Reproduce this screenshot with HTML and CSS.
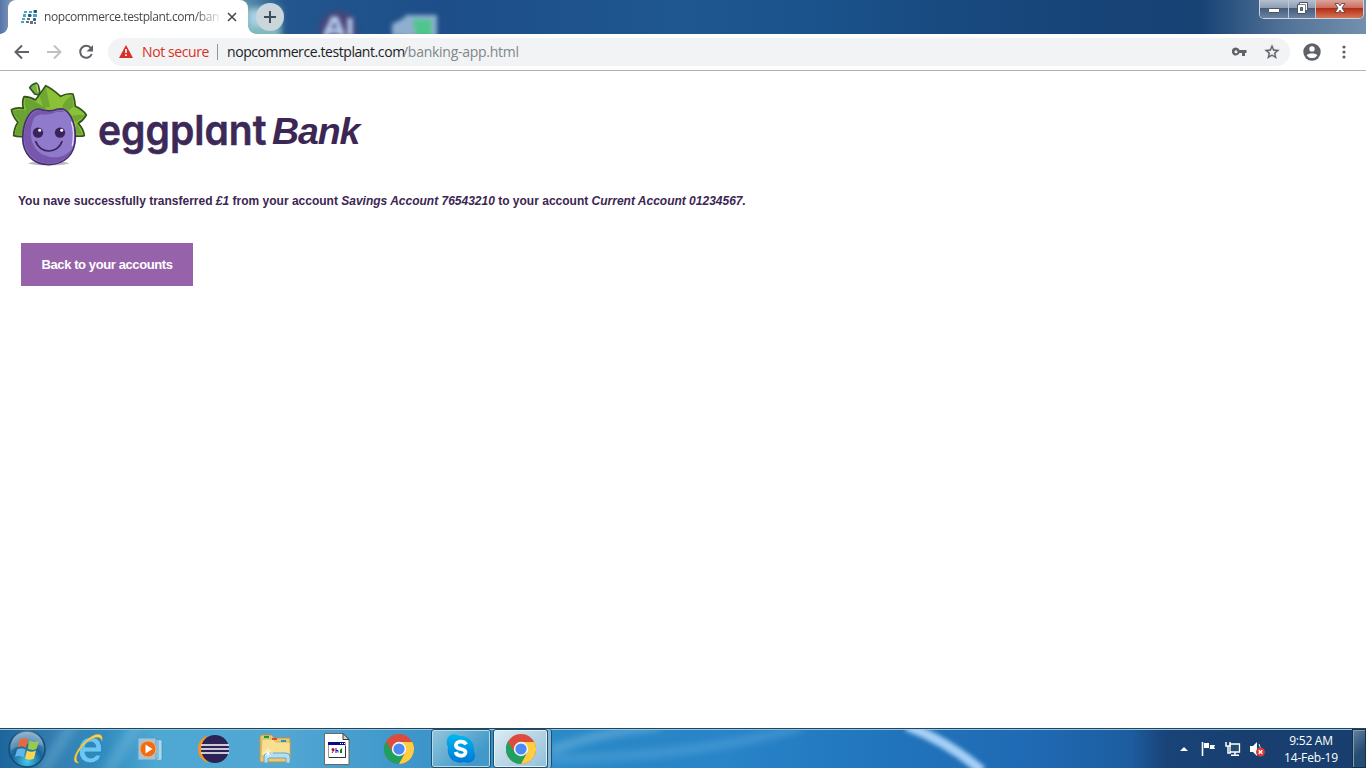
FILE: index.html
```
<!DOCTYPE html>
<html lang="en">
<head>
<meta charset="utf-8">
<title>eggplant Bank</title>
<link rel="stylesheet" href="styles.css">
</head>
<body>
<svg class="defs" width="0" height="0" aria-hidden="true">
  <defs>
    <symbol id="chrome" viewBox="0 0 30 30">
      <circle cx="15" cy="15" r="15" fill="#db4c3f"/>
      <path d="M15 15 8.800 18.600 2 7.500A15 15 0 0 0 15 30L21.200 18.600Z" fill="#1fa05e"/>
      <path d="M15 8H28.300A15 15 0 0 1 15 30L21.200 18.600Z" fill="#ffcd40"/>
      <circle cx="15" cy="15" r="7.200" fill="#f4f4f4"/>
      <circle cx="15" cy="15" r="5.600" fill="#4a8af4"/>
    </symbol>
    <filter id="soft" x="-30%" y="-30%" width="160%" height="160%"><feGaussianBlur stdDeviation="3"/></filter>
    <filter id="wide" x="-30%" y="-60%" width="160%" height="220%"><feGaussianBlur stdDeviation="2"/></filter>
    <filter id="haze" x="-30%" y="-60%" width="160%" height="220%"><feGaussianBlur stdDeviation="4"/></filter>
  </defs>
</svg>
<div class="screen">
  <header class="titlebar">
    <svg class="wallpaper" viewBox="0 0 1366 34" preserveAspectRatio="none" aria-hidden="true">
      <g filter="url(#soft)">
        <rect x="240" y="8" width="41" height="34" fill="#7fb9bd"/><rect x="250" y="9" width="16" height="17" fill="#abd1e5"/>
        <circle cx="338" cy="29" r="18" fill="#494477"/>
      </g>
      <g filter="url(#wide)">
        <path d="M325 36 333 19h3l7 17M328 31h12M350 18v18" fill="none" stroke="#b5caec" stroke-width="5"/>
        <path d="M392 24l14-7v19h-14zM405 15h32v22h-32z" fill="#8eafd0"/><path d="M412 19h20v18h-16z" fill="#50c58d"/>
      </g>
    </svg>
    <div class="tab">
      <svg width="18" height="14" viewBox="0 0 18 14"><g fill="#4ba3cc"><rect x="4" y="1" width="3" height="2"/><rect x="9" y="1" width="3" height="2"/><rect x="3" y="4" width="3" height="3"/><rect x="2" y="8" width="3" height="2"/><rect x="1" y="11" width="3" height="2"/><rect x="13" y="4" width="4" height="3"/></g><g fill="#24587a"><rect x="13.500" y="0" width="3.500" height="3" rx="1"/><rect x="8" y="4" width="3.500" height="3" rx="1"/><rect x="13" y="8" width="3" height="3" rx="1"/></g><g fill="#66717a"><rect x="7" y="8" width="3" height="2"/><rect x="6" y="11" width="3" height="2"/><rect x="10" y="11" width="3" height="3"/><rect x="14" y="12" width="2" height="2"/></g></svg>
      <span class="tab-title">nopcommerce.testplant.com/ban</span>
      <svg width="10" height="10" viewBox="0 0 10 10"><path d="M1 1l8 8M9 1 1 9" stroke="#45494d" stroke-width="1.600"/></svg>
    </div>
    <div class="new-tab"><svg width="14" height="14" viewBox="0 0 14 14"><path d="M7 1v12M1 7h12" stroke="#3d4d56" stroke-width="2"/></svg></div>
    <div class="window-buttons">
      <span class="wb wb-min"><svg width="14" height="18" viewBox="0 0 14 18"><rect x="1.500" y="8.500" width="11" height="4" rx=".5" fill="#fff" stroke="#4a5565"/></svg></span>
      <span class="wb wb-restore"><svg width="13" height="18" viewBox="0 0 13 18"><path d="M3.500 2.500h8v8h-2v3h-8v-9h2z" fill="#fff" stroke="#4a5565"/><path d="M4.500 7.500h2v3h-2z" fill="#72839a" stroke="#4a5565"/><path d="M4 4.500h5.500v6" fill="none" stroke="#4a5565" stroke-width=".7"/></svg></span>
      <span class="wb wb-close"><svg width="14" height="18" viewBox="0 0 14 18"><path d="M2 3.500h3.300L7 5.800l1.700-2.300H12L9 8l3 4.500H8.700L7 10.200l-1.700 2.300H2L5 8z" fill="#fff" stroke="#5a4350" stroke-width=".9"/></svg></span>
    </div>
  </header>
  <nav class="toolbar">
    <svg class="nav-icon" width="16" height="16" viewBox="0 0 16 16"><path d="M15 8H2M8 1.500 1.500 8 8 14.500" fill="none" stroke="#5f6368" stroke-width="2"/></svg>
    <svg class="nav-icon" width="16" height="16" viewBox="0 0 16 16"><path d="M1 8h13M8 1.500 14.500 8 8 14.500" fill="none" stroke="#bfc1c3" stroke-width="2"/></svg>
    <svg class="nav-icon" width="16" height="16" viewBox="0 0 16 16"><path d="M13 4.200A6 6 0 1 0 13.800 10" fill="none" stroke="#5f6368" stroke-width="2"/><path d="M15 1v6.500H8.500z" fill="#5f6368"/></svg>
    <div class="omnibox">
      <svg class="warning" width="14" height="13" viewBox="0 0 14 13"><path d="M7 0l7 13H0z" fill="#d93025"/><path d="M7 4v4M7 9.300v1.700" stroke="#fff" stroke-width="1.600"/></svg>
      <span class="not-secure">Not secure</span>
      <i class="divider"></i>
      <span class="host">nopcommerce.testplant.com</span><span class="path">/banking-app.html</span>
      <svg class="key" width="15" height="10" viewBox="0 0 15 10"><path fill-rule="evenodd" d="M7.500 3A4 4 0 1 0 7.500 6H10v3h3V6h1.500V3zM4 3.300a1.500 1.500 0 1 1 0 3 1.500 1.500 0 0 1 0-3z" fill="#5f6368"/></svg>
      <svg class="star" width="16" height="16" viewBox="1 1 22 22"><path fill="#5f6368" d="M22 9.240l-7.190-.62L12 2 9.190 8.630 2 9.240l5.460 4.730L5.820 21 12 17.270 18.180 21l-1.630-7.030L22 9.240zM12 15.400l-3.760 2.270 1-4.280-3.320-2.880 4.380-.38L12 6.100l1.710 4.040 4.380.38-3.320 2.880 1 4.280L12 15.400z" stroke="#5f6368" stroke-width=".5"/></svg>
    </div>
    <svg class="avatar" width="18" height="18" viewBox="0 0 18 18"><circle cx="9" cy="9" r="8.700" fill="#5f6368"/><circle cx="9" cy="5.900" r="2.700" fill="#fff"/><path d="M3.700 12.200C5 10 13 10 14.300 12.200 12 16 6 16 3.700 12.200z" fill="#fff"/></svg>
    <svg class="menu" width="4" height="14" viewBox="0 0 4 14"><g fill="#5f6368"><circle cx="2" cy="2" r="1.600"/><circle cx="2" cy="7" r="1.600"/><circle cx="2" cy="12" r="1.600"/></g></svg>
  </nav>
  <main class="page">
    <div class="brand">
      <svg width="90" height="94" viewBox="0 0 270 282" role="img" aria-label="Eggplant mascot">
        <ellipse cx="134" cy="262" rx="60" ry="6" fill="#bcb6ca"/>
        <path d="M60 62Q80 63 94 72L108 54 125 29Q145 38 170 61 188 51 207 54 213 73 214 91 237 101 247 117 237 134 223 142 240 161 241 179 228 183 207 178L65 180Q47 184 29 179 30 156 42 139 27 124 22 101 38 93 58 97 53 77 60 62z" fill="#8ac135" stroke="#32531f" stroke-width="5" stroke-linejoin="round"/>
        <path d="M64 66Q90 72 116 91L128 96 65 145 53 176H33Q35 158 47 136 31 120 26 105 48 99 67 103 59 82 64 66z" fill="#6aa333"/>
        <path d="M126 34 138 94H118L106 60zM205 58Q184 70 174 93L194 104 208 92zM241 117Q224 114 203 120L215 139 236 124zM218 142L211 174 236 176z" fill="#70a734"/>
        <path d="M92 54 77 35Q84 24 97 21L103 28 108 50 103 57z" fill="#79b13b" stroke="#2f5527" stroke-width="5" stroke-linejoin="round"/>
        <path d="M98 25 102 48" stroke="#b2db75" stroke-width="4"/>
        <path d="M106 99Q121 106 145 104 163 97 178 99C202 109 214 147 214 184 214 237 180 265 135 266 88 266 57 234 56 187 57 137 77 98 106 99z" fill="#8f7acb" stroke="#44306c" stroke-width="5"/>
        <path d="M107 102C79 105 61 140 60 184 60 233 94 262 135 262 172 262 200 240 207 215 185 244 153 251 120 237 76 218 72 163 92 123L110 115Q133 119 158 108L181 108 172 103Q151 108 138 109 119 108 107 102z" fill="#7757ac"/>
        <path d="M202 137Q213 165 205 210" fill="none" stroke="#e8ddff" stroke-width="4"/>
        <g fill="#3b2359"><circle cx="102" cy="170" r="15.500"/><circle cx="168" cy="170" r="15.500"/></g>
        <g fill="#fff"><circle cx="107" cy="163" r="4.500"/><circle cx="173" cy="163" r="4.500"/></g>
        <path d="M95 197Q107 225 135 225 163 224 174 197" fill="none" stroke="#3b2359" stroke-width="5" stroke-linecap="round"/>
      </svg>
      <svg class="wordmark" width="174" height="68" viewBox="94 96 174 68"><text class="wordmark-text" x="98" y="143.500" textLength="168.500" lengthAdjust="spacingAndGlyphs">eggplant</text></svg>
      <h1 class="bank">Bank</h1>
    </div>
    <p class="message">You nave successfully transferred <em>£1</em> from your account <em>Savings Account 76543210</em> to your account <em>Current Account 01234567.</em></p>
    <button class="back">Back to your accounts</button>
  </main>
  <footer class="taskbar">
    <svg class="wallpaper" viewBox="0 0 1366 40" preserveAspectRatio="none" aria-hidden="true">
      <g filter="url(#haze)" fill="none">
        <path d="M42 44 72-4M107 44 137-4" stroke="#90cbe6" stroke-opacity=".28" stroke-width="12"/>
        <path d="M550 31Q700 28 800-2" stroke="#60afe0" stroke-opacity=".38" stroke-width="10"/>
        <path d="M550 22Q600 3 660-3" stroke="#8bc7e9" stroke-opacity=".4" stroke-width="9"/>
      </g>
      <path d="M907-3Q948 13 982 43" fill="none" stroke="#a5cff6" stroke-width="10" filter="url(#wide)"/>
    </svg>
    <div class="start">
      <svg width="38" height="38" viewBox="0 0 38 38"><defs><radialGradient id="orb" cx=".5" cy=".85" r=".85"><stop stop-color="#43c9ed"/><stop offset=".5" stop-color="#17639a"/><stop offset="1" stop-color="#80a8c4"/></radialGradient></defs><circle cx="19" cy="19" r="18" fill="url(#orb)" stroke="#174b74" stroke-width="1.500"/><path d="M3 16A16 16 0 0 1 35 16Q20 10 3 20z" fill="#fff" opacity=".2"/><path d="M12 9.500Q16 7 20 9.500L18 18Q14 15.500 9.500 17.500z" fill="#eb683b"/><path d="M21.500 10.500Q26 13 31 11L28.500 19Q24 21 19.500 18.500z" fill="#9aca4b"/><path d="M9 19.500Q13.500 17 17.500 19.500L15.500 27.500Q11.500 25 7 27z" fill="#63b5e9"/><path d="M19 20.500Q23 23 28 20.500L26 28.500Q21 31 17 28.500z" fill="#ffd34b"/></svg>
    </div>
    <div class="slot"><svg width="32" height="32" viewBox="0 0 32 32"><path fill-rule="evenodd" d="M28.500 19H12Q12.500 25 18 25 21.500 25 23 22H28Q25 30 17 30 6 29 6 17 7 5 18 4 30 5 28.500 19zM12 14H23Q22 9 18 9 13 9 12 14z" fill="#6cc7f1" stroke="#2381bd" stroke-width=".8"/><path d="M6 30C-4 31 3 15 15 6 22 0 31-1 29 8 27 2 21 4 14 9 5 17 0 27 6 30z" fill="#ffd450" stroke="#c99b29" stroke-width=".5"/></svg></div>
    <div class="slot"><svg width="30" height="28" viewBox="0 0 30 28"><path d="M18 4l8 1v20l-8 1zM16 3l6 1v20l-6 1z" fill="#a7d9ef" stroke="#4d91b5" stroke-width=".7"/><rect x="2" y="3" width="18" height="22" fill="#9bc6e1" stroke="#5f9dc1"/><circle cx="12" cy="14" r="8" fill="#ef6b18" stroke="#ffad63"/><path d="M9.500 9.500v9l7-4.500z" fill="#fff"/></svg></div>
    <div class="slot slot-eclipse"><svg width="32" height="30" viewBox="0 0 32 30"><path d="M11 1Q0 4 0 15 0 26 11 29 5 24 4 15 4 6 11 1z" fill="#f7941e"/><circle cx="17" cy="15" r="14" fill="#2c2255"/><path d="M3 11h28M3 15h28M3 19h28" stroke="#fff" stroke-width="1.700"/></svg></div>
    <div class="slot"><svg width="32" height="30" viewBox="0 0 32 30"><path d="M1 28V3Q1 1 3 1h10l2 3h16v24z" fill="#eacb72" stroke="#b89344"/><path d="M3 5h11l3 3h14v17l-14-3H2z" fill="#f7e092" stroke="#c9a85c" stroke-width=".7"/><path d="M5 3h5" stroke="#169b42" stroke-width="2"/><path d="M13 5h5" stroke="#d44b37" stroke-width="2"/><path d="M22 7h5" stroke="#358ebd" stroke-width="2"/><path d="M5 29v-6q0-4 4-4h18q4 0 4 4v6h-4v-5H9v5z" fill="#b5def1" stroke="#67a6c8"/><path d="M9 14v10M4 19h10M6 16l6 6M12 16l-6 6" stroke="#fff" stroke-width=".8"/></svg></div>
    <div class="slot"><svg width="26" height="32" viewBox="0 0 26 32"><path d="M.5.500H19l6 6v25H.5z" fill="#fff" stroke="#6f6959"/><path d="M19 .5v6h6z" fill="#d6d6d6" stroke="#333"/><path d="M4.500 9.500h17v15h-17z" fill="#fff" stroke="#999"/><path d="M4 9h17v3H4z" fill="#08088a"/><path d="M16 10.500h1M18 10.500h1M20 10.500h1" stroke="#fff"/><circle cx="9" cy="16.500" r="1.500" fill="#b71322"/><path d="M10 17l-2 3" stroke="#b71322"/><path d="M12 15v5M12 17.500h2v2" fill="none" stroke="#1010b0"/><path d="M16 20v-3l2-2v5z" fill="#087b19"/><path d="M21.500 13v11.500H5" fill="none" stroke="#333"/></svg></div>
    <div class="slot"><svg class="chrome-icon"><use href="#chrome"/></svg></div>
    <div class="task task-skype"><svg width="30" height="30" viewBox="0 0 30 30"><defs><linearGradient id="sky" x2="0" y2="1"><stop stop-color="#00b8f0"/><stop offset="1" stop-color="#0078d4"/></linearGradient></defs><path d="M1 6C2 0 9-1 13 2 22 1 29 8 28 17 32 25 25 31 18 28 8 31 0 23 2 13Q0 10 1 6z" fill="url(#sky)"/><path d="M20 10.500C18 6 9 7 10 12 11 16 19 14 19.500 18 20 23 11 23 9.500 18" fill="none" stroke="#fff" stroke-width="3.800"/></svg></div>
    <div class="task task-chrome"><svg class="chrome-icon"><use href="#chrome"/></svg></div>
    <div class="task-stack"></div>
    <div class="tray">
      <svg width="8" height="4" viewBox="0 0 8 4"><path d="M0 4 4 0l4 4z" fill="#fff"/></svg>
      <svg class="flag" width="16" height="16" viewBox="0 0 16 16"><path d="M1.500 1v14" stroke="#fff" stroke-width="1.600"/><path d="M3 2h5l1 2h5l-1 2 1 2H9L8 7H3z" fill="#fff"/><path d="M8.500 2v5.500" stroke="#1b4572"/></svg>
      <svg class="network" width="16" height="16" viewBox="0 0 16 16"><path d="M5 3h9.500v8H5z" fill="#244d72" stroke="#fff" stroke-width="1.300"/><path d="M10 11v3M6 14.300h8M1 1v4h4V1M3 5v7h3" fill="none" stroke="#fff" stroke-width="1.500"/></svg>
      <svg class="volume" width="17" height="16" viewBox="0 0 17 16"><path d="M1 5h3l4-4v14l-4-4H1z" fill="#fff"/><path d="M10 3q3 4 0 9" fill="none" stroke="#d5e0e9"/><circle cx="11.500" cy="11" r="4.500" fill="#dd3833"/><path d="M9.700 9.200l3.600 3.600M13.300 9.200l-3.600 3.600" stroke="#fff" stroke-width="1.400"/></svg>
      <div class="clock"><span class="time">9:52 AM</span><span class="date">14-Feb-19</span></div>
      <div class="show-desktop"></div>
    </div>
  </footer>
</div>
</body>
</html>
```
FILE: styles.css
```
* { box-sizing: border-box; }
body { margin: 0; overflow: hidden; background: #fff; }
svg { display: block; flex: none; }
.defs { position: absolute; }
.screen { width: 1366px; height: 768px; display: flex; flex-direction: column; font-family: "Open Sans", "Noto Sans", sans-serif; }
.titlebar { position: relative; height: 34px; display: flex; align-items: flex-start; padding-left: 8px; background: linear-gradient(90deg, #5675aa 0, #738db5 8px, #5b8ea9 244px, #23568e 285px, #1d4e89 440px, #1f5791 680px, #1b548d 800px, #184a80 940px, #174377 1110px, #174274 1200px, #4f7096 1280px, #7390ad 1366px); }
.wallpaper { position: absolute; inset: 0; width: 100%; height: 100%; pointer-events: none; }
.tab { position: relative; width: 240px; height: 34px; display: flex; align-items: center; padding: 0 11px 0 12px; background: #fff; border-radius: 8px 8px 0 0; }
.tab::before, .tab::after { content: ""; position: absolute; bottom: 0; width: 8px; height: 8px; }
.tab::before { left: -8px; background: radial-gradient(circle at 0 0, transparent 7.5px, #fff 8px); }
.tab::after { right: -8px; background: radial-gradient(circle at 100% 0, transparent 7.5px, #fff 8px); }
.tab-title { width: 178px; margin: 0 5px 0 6px; overflow: hidden; font-size: 12px; line-height: 18px; letter-spacing: -.42px; white-space: nowrap; color: #45494d; mask-image: linear-gradient(90deg, #000 150px, transparent 179px); }
.new-tab { position: relative; width: 28px; height: 28px; display: grid; place-items: center; margin: 3px 0 0 8px; border-radius: 50%; background: #cad6dc; }
.window-buttons { position: relative; width: 105px; height: 19px; display: flex; margin: 0 2px 0 auto; border: 1px solid #cbd4df; border-top: 0; border-radius: 0 0 5px 5px; overflow: hidden; box-shadow: inset 0 0 0 1px #263448; }
.wb { height: 18px; display: grid; place-items: center; border-right: 1px solid #bdc8d5; background: linear-gradient(#b4bfce 0, #8d9cb2 44%, #455d7b 46%, #6b839f 100%); }
.wb-min { width: 29px; }
.wb-restore { width: 27px; }
.wb-close { flex: 1; border: 0; background: linear-gradient(#dca49a 0, #ca6d5d 44%, #b52b13 46%, #d57657 100%); }
.toolbar { height: 37px; display: flex; align-items: center; padding: 0 20px 0 14px; border-bottom: 1px solid #b1b2b4; background: #fff; }
.nav-icon { margin-right: 16px; }
.nav-icon + .nav-icon + .nav-icon { margin-right: 14px; }
.omnibox { width: 1182px; height: 28px; display: flex; align-items: center; padding: 0 10px 0 11px; border-radius: 14px; background: #f1f3f4; font-size: 14px; line-height: 20px; white-space: nowrap; }
.warning { margin-bottom: 1px; }
.not-secure { width: 67px; margin-left: 9px; color: #d93025; letter-spacing: -.4px; }
.divider { width: 1px; height: 16px; margin: 0 9px 0 8px; background: #919498; }
.host { width: 176px; color: #202124; letter-spacing: -.42px; }
.path { color: #80868b; letter-spacing: -.27px; }
.key { margin-left: auto; }
.star { margin-left: 17px; }
.avatar { margin-left: 13px; }
.menu { margin-left: auto; }
.page { flex: 1; display: flex; flex-direction: column; align-items: flex-start; padding: 5px 4px; color: #3c2653; font-family: "Liberation Sans", Arial, sans-serif; }
.brand { display: flex; height: 94px; }
.wordmark { margin-top: 21px; }
.wordmark-text { font-family: Inter, sans-serif; font-size: 41px; font-weight: 600; font-feature-settings: "cv11"; fill: #3c2958; stroke: #3c2958; stroke-width: .5px; }
.bank { margin: 34px 0 0 4px; font-size: 37.5px; line-height: 43px; font-style: italic; font-weight: bold; letter-spacing: -1.1px; }
.message { margin: 23px 0 0 14px; font-size: 12px; line-height: 16px; font-weight: bold; letter-spacing: 0; white-space: nowrap; }
.back { width: 172px; height: 43px; margin: 34px 0 0 17px; padding: 0; border: 0; background: #9662aa; color: #fff; font: bold 13px "Liberation Sans", Arial, sans-serif; letter-spacing: -.4px; white-space: nowrap; }
.taskbar { position: relative; height: 40px; display: flex; align-items: center; border-top: 1px solid #24445b; box-shadow: inset 0 1px #91c6e2; background: linear-gradient(90deg, #1d659d 0, #3480b3 60px, #328cbf 105px, #4da8d3 155px, #52a7d4 280px, #3d95c9 420px, #2988c6 570px, #2984c8 720px, #2175bc 880px, #1f69b3 1040px, #1d5d9f 1130px, #194478 1165px, #183f70 1240px, #173e6e 1366px); }
.start { position: relative; width: 58px; padding-left: 8px; }
.slot { position: relative; width: 62px; display: flex; justify-content: center; }
.slot-eclipse { padding-left: 1px; }
.chrome-icon { width: 30px; height: 30px; }
.task { position: relative; height: 39px; display: grid; place-items: center; border: 1px solid #214e6d; border-radius: 3px; box-shadow: inset 0 0 0 1px #b6dceb; background: linear-gradient(135deg, #93c6dc, #4299c9 75%); }
.task-skype { width: 60px; margin-left: 1px; }
.task-chrome { width: 55px; margin-left: 2px; background: linear-gradient(135deg, #ddecf2, #91bfd9); box-shadow: inset 0 0 0 1px #e1f3f9; }
.task-stack { position: relative; width: 4px; height: 39px; border-right: 1px solid #214e6d; border-radius: 0 3px 3px 0; background: #81b6d4; }
.tray { position: relative; height: 39px; display: flex; align-items: center; margin-left: auto; color: #fff; }
.flag { margin-left: 13px; }
.network { margin-left: 8px; }
.volume { margin-left: 8px; }
.clock { width: 74px; display: flex; flex-direction: column; align-items: center; margin: 0 4px 0 8px; font-size: 12px; line-height: 17px; white-space: nowrap; }
.time { letter-spacing: -.25px; }
.date { letter-spacing: -.15px; }
.show-desktop { width: 14px; height: 39px; border: 1px solid #163047; box-shadow: inset 1px 1px #7c9cb8; background: linear-gradient(135deg, #66819d, #244c74 60%); }
```
